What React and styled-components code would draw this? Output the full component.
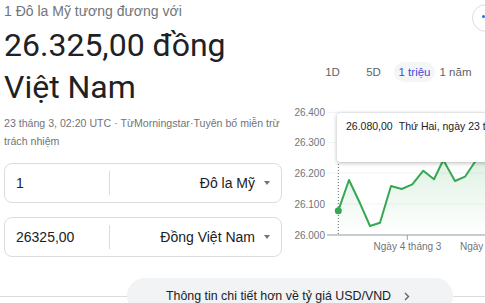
import React from "react"
import styled, { createGlobalStyle } from "styled-components"

const GlobalStyle = createGlobalStyle`
  html, body {
    margin: 0;
    padding: 0;
    background: #fff;
    overflow: hidden;
  }
  body {
    font-family: "Liberation Sans", Arial, sans-serif;
    color: #202124;
  }
`

const Page = styled.div`
  position: relative;
  width: 485px;
  height: 303px;
  overflow: hidden;
  display: flex;
  flex-direction: column;
`

const Top = styled.div`
  display: flex;
`

const LeftCol = styled.div`
  width: 286px;
  padding-left: 4px;
  flex-shrink: 0;
`

const Caption = styled.div`
  margin-top: 1px;
  font-size: 14px;
  line-height: 20px;
  color: #70757a;
`

const Amount = styled.div`
  margin-top: 3px;
  font-family: Roboto, "Liberation Sans", sans-serif;
  font-size: 32px;
  line-height: 42px;
  color: #202124;
`

const Meta = styled.div`
  margin-top: 6px;
  font-size: 10.6px;
  line-height: 18px;
  color: #70757a;
`

const Converter = styled.div`
  margin-top: 13px;
  display: flex;
  flex-direction: column;
  gap: 14px;
  width: 278px;
`

const Field = styled.div`
  box-sizing: border-box;
  height: 40px;
  border: 1px solid #dadce0;
  border-radius: 8px;
  display: flex;
  align-items: center;
  font-size: 14px;
  color: #202124;
`

const Value = styled.div`
  width: 93px;
  padding-left: 11px;
`

const Divider = styled.div`
  width: 1px;
  height: 24px;
  background: #dadce0;
`

const Select = styled.div`
  flex: 1;
  display: flex;
  justify-content: flex-end;
  align-items: center;
  gap: 9px;
  padding-right: 11px;
`

const Caret = styled.span`
  width: 0;
  height: 0;
  border-left: 3px solid transparent;
  border-right: 3px solid transparent;
  border-top: 4px solid #70757a;
`

const RightCol = styled.div`
  position: relative;
  flex: 1;
  padding-top: 62px;
`

const Tabs = styled.div`
  display: flex;
  padding-left: 22px;
`

const Tab = styled.div`
  width: 41px;
  height: 20px;
  border-radius: 10px;
  display: flex;
  align-items: center;
  justify-content: center;
  font-size: 11.5px;
  color: ${p => (p.$active ? "#3c4fd6" : "#5f6368")};
  background: ${p => (p.$active ? "#f4f5f7" : "transparent")};
`

const Chart = styled.svg`
  display: block;
  margin-top: 23px;
  overflow: visible;
  font-family: "Liberation Sans", Arial, sans-serif;
`

const Tooltip = styled.div`
  position: absolute;
  left: 47px;
  top: 113px;
  width: 220px;
  height: 49px;
  box-sizing: border-box;
  padding: 6px 0 0 9px;
  background: #fff;
  border-radius: 2px;
  box-shadow: 0 1px 4px rgba(0, 0, 0, 0.28);
  font-size: 10.5px;
  line-height: 15px;
  color: #202124;
  white-space: nowrap;
`

const TipDate = styled.span`
  margin-left: 6px;
`

const RoundButton = styled.div`
  position: absolute;
  left: 472px;
  top: 4px;
  width: 28px;
  height: 28px;
  box-sizing: border-box;
  border: 1px solid #dadce0;
  border-radius: 50%;
  background: #fff;
  &::after {
    content: "";
    position: absolute;
    left: 9px;
    top: 10px;
    width: 3px;
    height: 3px;
    border-radius: 50%;
    background: #1a73e8;
  }
`

const Footer = styled.div`
  margin-top: 21px;
  display: flex;
  align-items: center;
  height: 36px;
`

const Rule = styled.div`
  height: 1px;
  background: #dadce0;
  width: ${p => (p.$w ? `${p.$w}px` : "auto")};
  flex: ${p => (p.$w ? "none" : "1")};
`

const MoreButton = styled.div`
  width: 326px;
  height: 36px;
  box-sizing: border-box;
  border-radius: 18px;
  background: #f1f3f4;
  display: flex;
  align-items: center;
  gap: 13px;
  padding-left: 39px;
  font-size: 12.4px;
  color: #202124;
  white-space: nowrap;
`

const ticks = [
  { label: "26.400", y: 7.3 },
  { label: "26.300", y: 37.7 },
  { label: "26.200", y: 68 },
  { label: "26.100", y: 99 },
  { label: "26.000", y: 130 },
]

const points = [
  [48.3, 105.7], [59, 75], [70, 98.3], [80, 121], [90, 117.7],
  [101, 81], [111.7, 84], [122.3, 79.3], [133.3, 65.7], [144, 74.3],
  [153.3, 55], [165, 76], [175, 71.7], [185, 56.7], [195, 50], [205, 46],
]

const line = points.map(p => p.join(",")).join(" ")
const area = `48.3,130 ${line} 205,130`

const RateChart = () => (
  <Chart width="195" height="150" viewBox="0 0 195 150">
    <defs>
      <linearGradient id="fill" x1="0" y1="0" x2="0" y2="1">
        <stop offset="0" stopColor="#34a853" stopOpacity="0.18" />
        <stop offset="1" stopColor="#34a853" stopOpacity="0" />
      </linearGradient>
    </defs>
    {ticks.map(t => (
      <g key={t.label}>
        <line x1="37" x2="210" y1={t.y} y2={t.y} stroke="#f1f3f4" />
        <text x="35" y={t.y + 3.5} fontSize="10" fill="#70757a" textAnchor="end">
          {t.label}
        </text>
      </g>
    ))}
    <polygon points={area} fill="url(#fill)" />
    <line x1="37" x2="210" y1="130" y2="130" stroke="#9aa0a6" />
    <line x1="117.3" x2="117.3" y1="130" y2="135" stroke="#9aa0a6" />
    <line x1="48.3" x2="48.3" y1="8" y2="130" stroke="#5f6368" strokeDasharray="1 2" />
    <polyline points={line} fill="none" stroke="#34a853" strokeWidth="2" strokeLinejoin="round" />
    <circle cx="48.3" cy="105.7" r="3.5" fill="#34a853" />
    <text x="117.5" y="145" fontSize="10" fill="#70757a" textAnchor="middle">
      Ngày 4 tháng 3
    </text>
    <text x="170" y="145" fontSize="10" fill="#70757a">
      Ngày
    </text>
  </Chart>
)

export default function App() {
  return (
    <Page>
      <GlobalStyle />
      <Top>
        <LeftCol>
          <Caption>1 Đô la Mỹ tương đương với</Caption>
          <Amount>
            26.325,00 đồng
            <br />
            Việt Nam
          </Amount>
          <Meta>
            23 tháng 3, 02:20 UTC · TừMorningstar·Tuyên bố miễn trừ trách nhiệm
          </Meta>
          <Converter>
            <Field>
              <Value>1</Value>
              <Divider />
              <Select>
                Đô la Mỹ <Caret />
              </Select>
            </Field>
            <Field>
              <Value>26325,00</Value>
              <Divider />
              <Select>
                Đồng Việt Nam <Caret />
              </Select>
            </Field>
          </Converter>
        </LeftCol>
        <RightCol>
          <Tabs>
            <Tab>1D</Tab>
            <Tab>5D</Tab>
            <Tab $active>1 triệu</Tab>
            <Tab>1 năm</Tab>
          </Tabs>
          <RateChart />
          <Tooltip>
            26.080,00<TipDate>Thứ Hai, ngày 23 tháng 3</TipDate>
          </Tooltip>
        </RightCol>
      </Top>
      <RoundButton />
      <Footer>
        <Rule $w={127} />
        <MoreButton>
          Thông tin chi tiết hơn về tỷ giá USD/VND
          <svg width="6" height="9" viewBox="0 0 6 9">
            <path d="M1 1l3.5 3.5L1 8" fill="none" stroke="#5f6368" strokeWidth="1.4" />
          </svg>
        </MoreButton>
        <Rule />
      </Footer>
    </Page>
  )
}
